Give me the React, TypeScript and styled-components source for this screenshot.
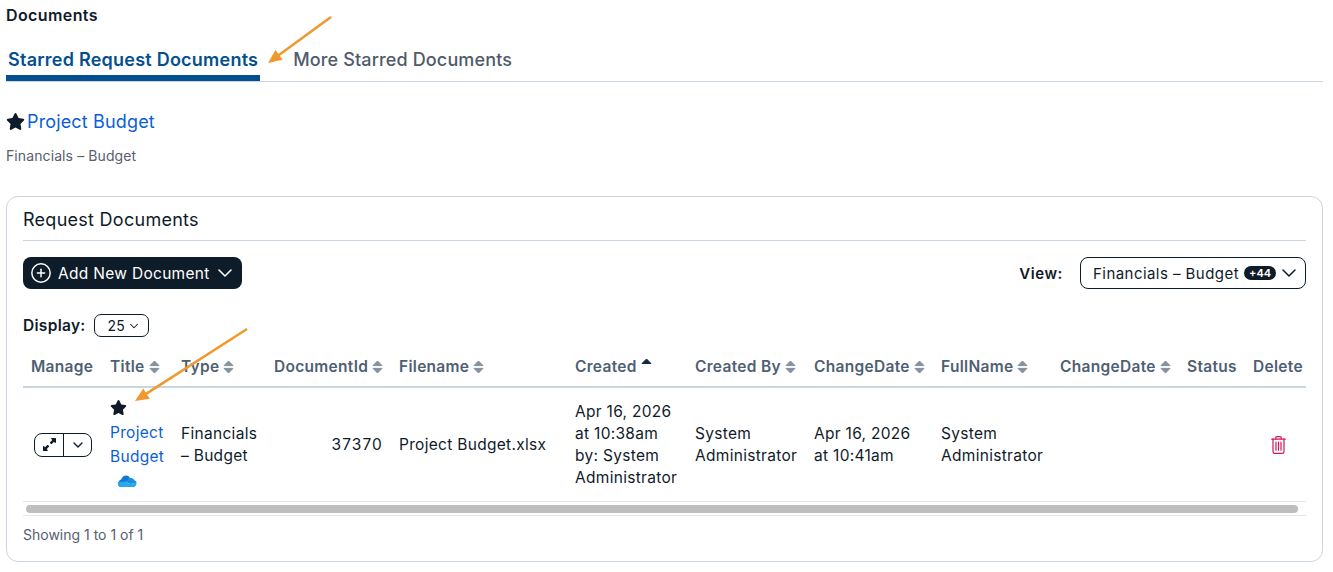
import React from 'react'
import styled, { createGlobalStyle } from 'styled-components'
import { ChevronDown, CirclePlus } from 'lucide-react'
import { FaStar, FaUpRightAndDownLeftFromCenter } from 'react-icons/fa6'

const GlobalStyle = createGlobalStyle`
  html, body {
    margin: 0;
    padding: 0;
    background: #ffffff;
  }

  body {
    font-family: Inter, "Liberation Sans", sans-serif;
    color: #0f1b2a;
    font-size: 15px;
  }
`

const columns = [
  { label: 'Manage', width: 79 },
  { label: 'Title', width: 71, sort: 'both' },
  { label: 'Type', width: 93, sort: 'both' },
  { label: 'DocumentId', width: 125, sort: 'both', right: true },
  { label: 'Filename', width: 176, sort: 'both' },
  { label: 'Created', width: 120, sort: 'up' },
  { label: 'Created By', width: 119, sort: 'both' },
  { label: 'ChangeDate', width: 127, sort: 'both' },
  { label: 'FullName', width: 119, sort: 'both' },
  { label: 'ChangeDate', width: 127, sort: 'both' },
  { label: 'Status', width: 66 },
  { label: 'Delete', width: 61 },
]

const SortIcon: React.FC<{ mode: string }> = ({ mode }) => (
  <SortSvg viewBox="0 0 11 14" $single={mode === 'up'}>
    {mode === 'up' ? (
      <path d="M5.5 1 10 5.5H1Z" fill="#0f2a44" stroke="#0f2a44" strokeLinejoin="round" />
    ) : (
      <g fill="#84919f" stroke="#84919f" strokeLinejoin="round">
        <path d="M5.5 1 10 5.6H1Z" />
        <path d="M5.5 13 10 8.4H1Z" />
      </g>
    )}
  </SortSvg>
)

const OneDriveIcon = () => (
  <svg width="20" height="13" viewBox="0 0 20 13">
    <path d="M4.2 4.4C5.2 1.6 7.4 0.4 9.4 0.6c1.6.1 2.9 1 3.6 2.4L8 8.4 1.2 8C1.6 6 2.6 4.8 4.2 4.4Z" fill="#0f78d4" />
    <path d="M13 3c2-.4 3.9.5 4.6 2.4 1.2.3 1.9 1.2 1.9 2.6L13 9 8 6.4Z" fill="#1490df" />
    <path d="M1.1 7.2 8 6.6l5 2.4 6.5-1.2c.2 2.2-.9 4-2.9 4.2H3.4C1.2 12 .2 9.2 1.1 7.2Z" fill="#28a8ea" />
  </svg>
)

const TrashIcon = () => (
  <svg width="15" height="18" viewBox="0 0 15 18" fill="none" stroke="#d3145a" strokeWidth="1.2" strokeLinecap="round">
    <path d="M4.8 2.8V1.8C4.8 1.1 5.3.7 6 .7h3c.7 0 1.2.4 1.2 1.1v1" />
    <path d="M.8 3.2h13.4" />
    <path d="M2 3.2v12.2c0 1.1.7 1.9 1.8 1.9h7.4c1.1 0 1.8-.8 1.8-1.9V3.2" />
    <path d="M5 6.2v8M7.5 6.2v8M10 6.2v8" />
  </svg>
)

const Arrow: React.FC<{ x1: number; y1: number; x2: number; y2: number; $left: number; $top: number }> = ({ x1, y1, x2, y2, $left, $top }) => {
  const angle = Math.atan2(y2 - y1, x2 - x1)
  const len = 15
  const spread = 0.42
  const a = [x2 - len * Math.cos(angle - spread), y2 - len * Math.sin(angle - spread)]
  const b = [x2 - len * Math.cos(angle + spread), y2 - len * Math.sin(angle + spread)]
  const w = Math.abs(x2 - x1) + 20
  const h = Math.abs(y2 - y1) + 20
  return (
    <ArrowSvg $left={$left} $top={$top} width={w} height={h} viewBox={`0 0 ${w} ${h}`}>
      <line x1={x1} y1={y1} x2={x2 - 8 * Math.cos(angle)} y2={y2 - 8 * Math.sin(angle)} stroke="#f0992f" strokeWidth="2.6" />
      <polygon points={`${x2},${y2} ${a[0]},${a[1]} ${b[0]},${b[1]}`} fill="#f0992f" />
    </ArrowSvg>
  )
}

const App: React.FC = () => (
  <Page>
    <GlobalStyle />
    <Heading>Documents</Heading>
    <Tabs>
      <Tab $active>Starred Request Documents</Tab>
      <Tab>More Starred Documents</Tab>
    </Tabs>

    <Starred>
      <StarredTitle>
        <FaStar size={19} color="#0f1b2a" />
        <BigLink>Project Budget</BigLink>
      </StarredTitle>
      <Muted>Financials – Budget</Muted>
    </Starred>

    <Card>
      <CardTitle>Request Documents</CardTitle>
      <Toolbar>
        <AddButton>
          <CirclePlus size={22} strokeWidth={1.6} />
          <span>Add New Document</span>
          <ChevronDown size={24} strokeWidth={1.6} />
        </AddButton>
        <ViewBox>
          <strong>View:</strong>
          <ViewSelect>
            Financials – Budget
            <Badge>+44</Badge>
            <ChevronDown size={24} strokeWidth={1.5} />
          </ViewSelect>
        </ViewBox>
      </Toolbar>

      <DisplayRow>
        <strong>Display:</strong>
        <DisplaySelect>
          25
          <ChevronDown size={14} strokeWidth={1.8} />
        </DisplaySelect>
      </DisplayRow>

      <Table>
        <colgroup>
          {columns.map((c, i) => (
            <Col key={i} $w={c.width} />
          ))}
        </colgroup>
        <thead>
          <tr>
            {columns.map((c, i) => (
              <Th key={i} $right={c.right}>
                {c.label}
                {c.sort && <SortIcon mode={c.sort} />}
              </Th>
            ))}
          </tr>
        </thead>
        <tbody>
          <tr>
            <Td>
              <ManageGroup>
                <ManagePart $wide>
                  <FaUpRightAndDownLeftFromCenter size={13} />
                </ManagePart>
                <ManagePart>
                  <ChevronDown size={16} strokeWidth={2} />
                </ManagePart>
              </ManageGroup>
            </Td>
            <Td>
              <TitleCell>
                <FaStar size={17} color="#0f1b2a" />
                <RowLink>
                  Project
                  <br />
                  Budget
                </RowLink>
                <CloudWrap>
                  <OneDriveIcon />
                </CloudWrap>
              </TitleCell>
            </Td>
            <Td>Financials – Budget</Td>
            <Td $right>37370</Td>
            <Td>Project Budget.xlsx</Td>
            <Td>
              Apr 16, 2026
              <br />
              at 10:38am
              <br />
              by: System
              <br />
              Administrator
            </Td>
            <Td>System Administrator</Td>
            <Td>
              Apr 16, 2026
              <br />
              at 10:41am
            </Td>
            <Td>System Administrator</Td>
            <Td />
            <Td />
            <Td>
              <TrashWrap>
                <TrashIcon />
              </TrashWrap>
            </Td>
          </tr>
        </tbody>
      </Table>

      <ScrollTrack>
        <ScrollThumb />
      </ScrollTrack>
      <Footer>Showing 1 to 1 of 1</Footer>
    </Card>

    <Arrow x1={64} y1={2} x2={1} y2={48} $left={267} $top={15} />
    <Arrow x1={113} y1={2} x2={1} y2={74} $left={134} $top={327} />
  </Page>
)

const Page = styled.div`
  position: relative;
  box-sizing: border-box;
  width: 1333px;
  height: 572px;
  padding: 6px 10px 0 6px;
  overflow: hidden;
`

const Heading = styled.div`
  font-size: 16px;
  font-weight: 600;
  line-height: 19px;
  letter-spacing: 0.4px;
`

const Tabs = styled.div`
  display: flex;
  gap: 31px;
  height: 49px;
  margin-top: 8px;
  box-sizing: border-box;
  border-bottom: 1px solid #cbd5e1;
  align-items: flex-end;
`

const Tab = styled.div<{ $active?: boolean }>`
  box-sizing: border-box;
  height: 42px;
  padding: 9px 2px 0;
  font-size: 18px;
  line-height: 24px;
  letter-spacing: ${(p) => (p.$active ? '0.24px' : '0.14px')};
  font-weight: ${(p) => (p.$active ? 600 : 500)};
  color: ${(p) => (p.$active ? '#04508f' : '#4f5b6b')};
  border-bottom: ${(p) => (p.$active ? '6px solid #04508f' : 'none')};
`

const Starred = styled.div`
  padding-top: 27px;
`

const StarredTitle = styled.div`
  display: flex;
  align-items: center;
  gap: 2px;
  height: 24px;
`

const BigLink = styled.span`
  color: #0b5ed7;
  font-size: 18px;
  font-weight: 400;
  letter-spacing: 0.15px;
`

const Muted = styled.div`
  margin-top: 14px;
  font-size: 14px;
  line-height: 18px;
  letter-spacing: 0.1px;
  color: #566070;
`

const Card = styled.section`
  box-sizing: border-box;
  height: 366px;
  margin-top: 31px;
  padding: 12px 16px 0;
  border: 1px solid #cbd5e1;
  border-radius: 12px;
`

const CardTitle = styled.div`
  height: 32px;
  box-sizing: border-box;
  border-bottom: 1px solid #cbd5e1;
  font-size: 18px;
  font-weight: 400;
  line-height: 22px;
  letter-spacing: 0.27px;
`

const Toolbar = styled.div`
  display: flex;
  justify-content: space-between;
  align-items: center;
  margin-top: 16px;
`

const AddButton = styled.button`
  display: flex;
  align-items: center;
  gap: 6px;
  box-sizing: border-box;
  height: 32px;
  width: 219px;
  padding: 0 7px;
  border: none;
  border-radius: 8px;
  background: #0e1b28;
  color: #ffffff;
  font: 400 15.5px Inter, sans-serif;
  letter-spacing: 0.3px;
  white-space: nowrap;

  svg {
    flex-shrink: 0;
  }

  svg:last-child {
    margin-left: -3px;
  }
`

const ViewBox = styled.div`
  display: flex;
  align-items: center;
  gap: 17px;

  strong {
    font-weight: 600;
    font-size: 15px;
    letter-spacing: 0.6px;
  }
`

const ViewSelect = styled.div`
  display: flex;
  align-items: center;
  box-sizing: border-box;
  height: 32px;
  width: 226px;
  padding: 0 4px 0 12px;
  border: 1px solid #0e1b28;
  border-radius: 8px;
  font-size: 15px;
  letter-spacing: 0.45px;
  white-space: nowrap;

  svg {
    flex-shrink: 0;
    margin-left: 1px;
  }
`

const Badge = styled.span`
  margin-left: 5px;
  background: #0e1b28;
  color: #ffffff;
  font-size: 11px;
  font-weight: 600;
  line-height: 14px;
  letter-spacing: 0;
  padding: 0 5px;
  border-radius: 8px;
`

const DisplayRow = styled.div`
  display: flex;
  align-items: center;
  gap: 8px;
  margin-top: 25px;
  font-size: 15.5px;

  strong {
    font-weight: 600;
    letter-spacing: 0.3px;
  }
`

const DisplaySelect = styled.div`
  display: flex;
  align-items: center;
  gap: 2px;
  box-sizing: border-box;
  width: 55px;
  height: 23px;
  padding-left: 13px;
  border: 1px solid #0e1b28;
  border-radius: 7px;
  font-size: 14px;
`

const Table = styled.table`
  table-layout: fixed;
  width: 1283px;
  border-collapse: collapse;
  margin-top: 11px;
`

const Col = styled.col<{ $w: number }>`
  width: ${(p) => p.$w}px;
`

const Th = styled.th<{ $right?: boolean }>`
  height: 39px;
  padding: 0 8px 2px;
  box-sizing: border-box;
  border-bottom: 2px solid #cbd5e1;
  text-align: ${(p) => (p.$right ? 'right' : 'left')};
  font-size: 15.5px;
  font-weight: 600;
  letter-spacing: 0.3px;
  color: #4f5f73;
  white-space: nowrap;
`

const SortSvg = styled.svg<{ $single?: boolean }>`
  width: 11px;
  height: 14px;
  margin-left: 4px;
  vertical-align: ${(p) => (p.$single ? '0' : '-2px')};
`

const Td = styled.td<{ $right?: boolean }>`
  height: 114px;
  padding: 0 8px;
  box-sizing: border-box;
  font-size: 15.5px;
  line-height: 22px;
  letter-spacing: ${(p) => (p.$right ? '1.1px' : '0.3px')};
  vertical-align: middle;
  text-align: ${(p) => (p.$right ? 'right' : 'left')};
`

const ManageGroup = styled.div`
  display: flex;
  width: 58px;
  height: 24px;
  margin-left: 3px;
  box-sizing: border-box;
  border: 1px solid #0e1b28;
  border-radius: 8px;
`

const ManagePart = styled.div<{ $wide?: boolean }>`
  display: flex;
  align-items: center;
  justify-content: center;
  width: ${(p) => (p.$wide ? '29px' : '27px')};
  border-right: ${(p) => (p.$wide ? '1px solid #0e1b28' : 'none')};
`

const TitleCell = styled.div`
  display: flex;
  flex-direction: column;
  align-items: flex-start;
  padding-bottom: 2px;
`

const RowLink = styled.span`
  color: #0b5ed7;
  line-height: 24px;
  margin-top: 5px;
`

const CloudWrap = styled.div`
  display: flex;
  justify-content: center;
  width: 34px;
  margin-top: 6px;
`

const TrashWrap = styled.div`
  display: flex;
  justify-content: center;
  width: 50px;
`

const ScrollTrack = styled.div`
  box-sizing: border-box;
  height: 15px;
  padding: 3px 8px 0 3px;
  border-top: 1px solid #e6e6e6;
  border-bottom: 1px solid #e6e6e6;
`

const ScrollThumb = styled.div`
  height: 8px;
  border-radius: 4px;
  background: #bebebe;
`

const Footer = styled.div`
  margin-top: 10px;
  font-size: 14px;
  line-height: 18px;
  color: #566070;
`

const ArrowSvg = styled.svg<{ $left: number; $top: number }>`
  position: absolute;
  left: ${(p) => p.$left}px;
  top: ${(p) => p.$top}px;
`

export default App
